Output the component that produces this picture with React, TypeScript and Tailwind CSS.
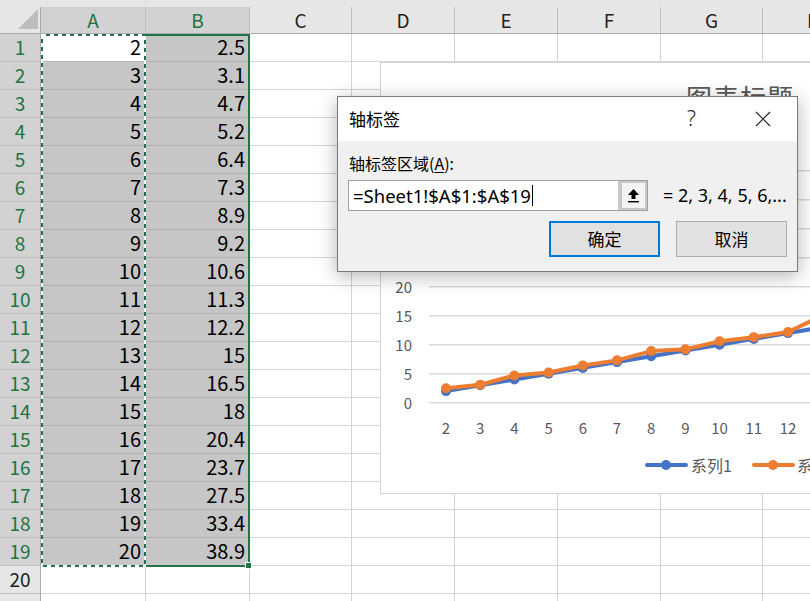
import React from 'react'

const colWidths = [105, 104, 102, 103, 103, 103, 102, 103]
const colNames = ['A', 'B', 'C', 'D', 'E', 'F', 'G', 'H']
const seriesA = Array.from({ length: 19 }, (_, i) => i + 2)
const seriesB = [2.5, 3.1, 4.7, 5.2, 6.4, 7.3, 8.9, 9.2, 10.6, 11.3, 12.2, 15, 16.5, 18, 20.4, 23.7, 27.5, 33.4, 38.9]

const font = { fontFamily: '"Noto Sans CJK SC", "Noto Sans", sans-serif' }
const latin = { fontFamily: '"Noto Sans", "Noto Sans CJK SC", sans-serif' }

function HeaderRow() {
  return (
    <div className="flex h-[27px]">
      <div className="relative h-[27px] w-[41px] shrink-0 border-r border-b border-[#ababab] bg-[#e6e6e6]">
        <svg className="absolute left-[18px] top-[2px]" width="20" height="20">
          <polygon points="20,0 20,20 0,20" fill="#bdbdbd" />
        </svg>
      </div>
      {colNames.map((c, i) => {
        const sel = i < 2
        return (
          <div
            key={c}
            style={{ width: colWidths[i] }}
            className={`flex h-[27px] shrink-0 items-center justify-center border-r border-b border-r-[#bfbfbf] border-b-[#ababab] text-[19px] ${sel ? 'bg-[#d2d2d2] text-[#217346]' : 'bg-[#e6e6e6] text-[#222]'}`}
          >
            {c}
          </div>
        )
      })}
    </div>
  )
}

function SheetRow({ n }: { n: number }) {
  const sel = n <= 19
  return (
    <div className="flex h-[28px]">
      <div
        className={`flex h-[28px] w-[41px] shrink-0 items-center justify-center border-r border-b border-r-[#ababab] border-b-[#bfbfbf] text-[19px] ${sel ? 'bg-[#d2d2d2] text-[#217346]' : 'bg-[#e6e6e6] text-[#222]'}`}
      >
        {n}
      </div>
      {colWidths.map((w, i) => {
        const inSel = sel && i < 2
        const active = n === 1 && i === 0
        let val = ''
        if (sel && i === 0) val = String(seriesA[n - 1])
        if (sel && i === 1) val = String(seriesB[n - 1])
        return (
          <div
            key={i}
            style={{ width: w }}
            className={`flex h-[28px] shrink-0 items-end justify-end border-r border-b pr-[4px] pb-[1px] text-[20px] leading-[26px] text-black ${inSel ? (active ? 'bg-white border-[#b4b4b4]' : 'bg-[#c6c6c6] border-[#afafaf]') : 'bg-white border-[#d4d4d4]'}`}
          >
            {val}
          </div>
        )
      })}
    </div>
  )
}

function Chart() {
  const cx = (i: number) => 65 + 34.2 * i
  const cy = (v: number) => 339.7 - v * 5.8
  const ptsA = seriesA.map((v, i) => `${cx(i)},${cy(v)}`).join(' ')
  const ptsB = seriesB.map((v, i) => `${cx(i)},${cy(v)}`).join(' ')
  return (
    <div className="absolute left-[380px] top-[62px] h-[432px] w-[760px] border border-[#d4d4d4] bg-white">
      <div className="absolute left-[305px] top-[14px] text-[26px] tracking-[1px] text-[#595959]" style={font}>
        图表标题
      </div>
      <svg className="absolute left-0 top-0" width="760" height="430">
        {[0, 5, 10, 15, 20, 25, 30, 35, 40].map(v => (
          <g key={v}>
            <line x1="48" x2="760" y1={cy(v)} y2={cy(v)} stroke="#d9d9d9" strokeWidth="1.5" />
            <text x="31" y={cy(v)} textAnchor="end" dominantBaseline="central" fontSize="15" fill="#595959" style={font}>
              {v}
            </text>
          </g>
        ))}
        {seriesA.map((v, i) => (
          <text key={i} x={cx(i)} y="364" textAnchor="middle" dominantBaseline="central" fontSize="15" fill="#595959" style={font}>
            {v}
          </text>
        ))}
        <polyline points={ptsA} fill="none" stroke="#4472c4" strokeWidth="4" strokeLinejoin="round" />
        {seriesA.map((v, i) => (
          <circle key={i} cx={cx(i)} cy={cy(v)} r="5" fill="#4472c4" />
        ))}
        <polyline points={ptsB} fill="none" stroke="#ed7d31" strokeWidth="4" strokeLinejoin="round" />
        {seriesB.map((v, i) => (
          <circle key={i} cx={cx(i)} cy={cy(v)} r="5" fill="#ed7d31" />
        ))}
        <line x1="266" x2="305" y1="402" y2="402" stroke="#4472c4" strokeWidth="4" strokeLinecap="round" />
        <circle cx="285" cy="402" r="5" fill="#4472c4" />
        <text x="310" y="402" dominantBaseline="central" fontSize="16" fill="#595959" style={font}>
          系列1
        </text>
        <line x1="373" x2="412" y1="402" y2="402" stroke="#ed7d31" strokeWidth="4" strokeLinecap="round" />
        <circle cx="392" cy="402" r="5" fill="#ed7d31" />
        <text x="416" y="402" dominantBaseline="central" fontSize="16" fill="#595959" style={font}>
          系列2
        </text>
      </svg>
    </div>
  )
}

function Dialog() {
  return (
    <div
      className="absolute left-[337px] top-[96px] flex h-[176px] w-[461px] flex-col border border-[#7a7a7a] bg-[#f0f0f0] shadow-[0_4px_18px_rgba(0,0,0,0.3)]"
      style={font}
    >
      <div className="flex h-[44px] shrink-0 items-center bg-white pl-[11px] pr-[26px]">
        <span className="text-[17px] text-black">轴标签</span>
        <span className="ml-auto mr-[59px] text-[21px] font-light text-[#222]" style={latin}>
          ?
        </span>
        <svg width="16" height="16" viewBox="0 0 16 16">
          <path d="M1 1 L15 15 M15 1 L1 15" stroke="#222" strokeWidth="1.1" />
        </svg>
      </div>
      <div className="flex flex-1 flex-col px-[10px] pt-[12px]">
        <div className="pl-[1px] text-[16px] leading-[20px] text-black">
          轴标签区域(<span className="underline underline-offset-2">A</span>):
        </div>
        <div className="mt-[7px] flex items-center">
          <div className="flex h-[31px] w-[300px] items-stretch border border-[#a0a0a0] bg-white">
            <div className="flex flex-1 items-center pl-[4px] text-[18.5px] text-black" style={latin}>
              <span>=Sheet1!$A$1:$A$19</span>
              <span className="ml-[1px] h-[21px] w-[1px] bg-black" />
            </div>
            <div className="flex w-[29px] items-center justify-center border-l border-[#c8c8c8] bg-[#c8c8c8]">
              <div className="flex h-[25px] w-[23px] items-center justify-center bg-[#f4f4f4]">
                <svg width="13" height="15" viewBox="0 0 13 15">
                  <path d="M6.5 1 L12 7 L8.5 7 L8.5 11 L4.5 11 L4.5 7 L1 7 Z" fill="#000" />
                  <rect x="1" y="13" width="11" height="1.4" fill="#000" />
                </svg>
              </div>
            </div>
          </div>
          <span className="ml-[15px] text-[18px] text-black" style={latin}>
            = 2, 3, 4, 5, 6,...
          </span>
        </div>
        <div className="mt-[10px] flex justify-end gap-[16px]">
          <button className="flex h-[36px] w-[111px] items-center justify-center border-2 border-[#0078d7] bg-[#e1e1e1] text-[17px] text-black">
            确定
          </button>
          <button className="flex h-[36px] w-[111px] items-center justify-center border border-[#adadad] bg-[#e1e1e1] text-[17px] text-black">
            取消
          </button>
        </div>
      </div>
    </div>
  )
}

export default function App() {
  return (
    <div className="relative h-[601px] w-[810px] overflow-hidden bg-white" style={font}>
      <div className="h-[7px] bg-[#e6e6e6]" />
      <HeaderRow />
      {Array.from({ length: 21 }, (_, i) => (
        <SheetRow key={i} n={i + 1} />
      ))}

      {/* selection A1:B19 */}
      <div className="absolute left-[41px] top-[34px] h-[533px] w-[209px] border-2 border-[#217346]" />
      <svg className="absolute left-[41px] top-[34px]" width="106" height="533">
        <rect x="1" y="1" width="103" height="531" fill="none" stroke="#217346" strokeWidth="2" />
        <rect x="1" y="1" width="103" height="531" fill="none" stroke="#fff" strokeWidth="2" strokeDasharray="4 4" />
      </svg>
      <div className="absolute left-[245px] top-[562px] h-[7px] w-[7px] border border-white bg-[#217346]" />

      <Chart />
      <Dialog />
    </div>
  )
}
